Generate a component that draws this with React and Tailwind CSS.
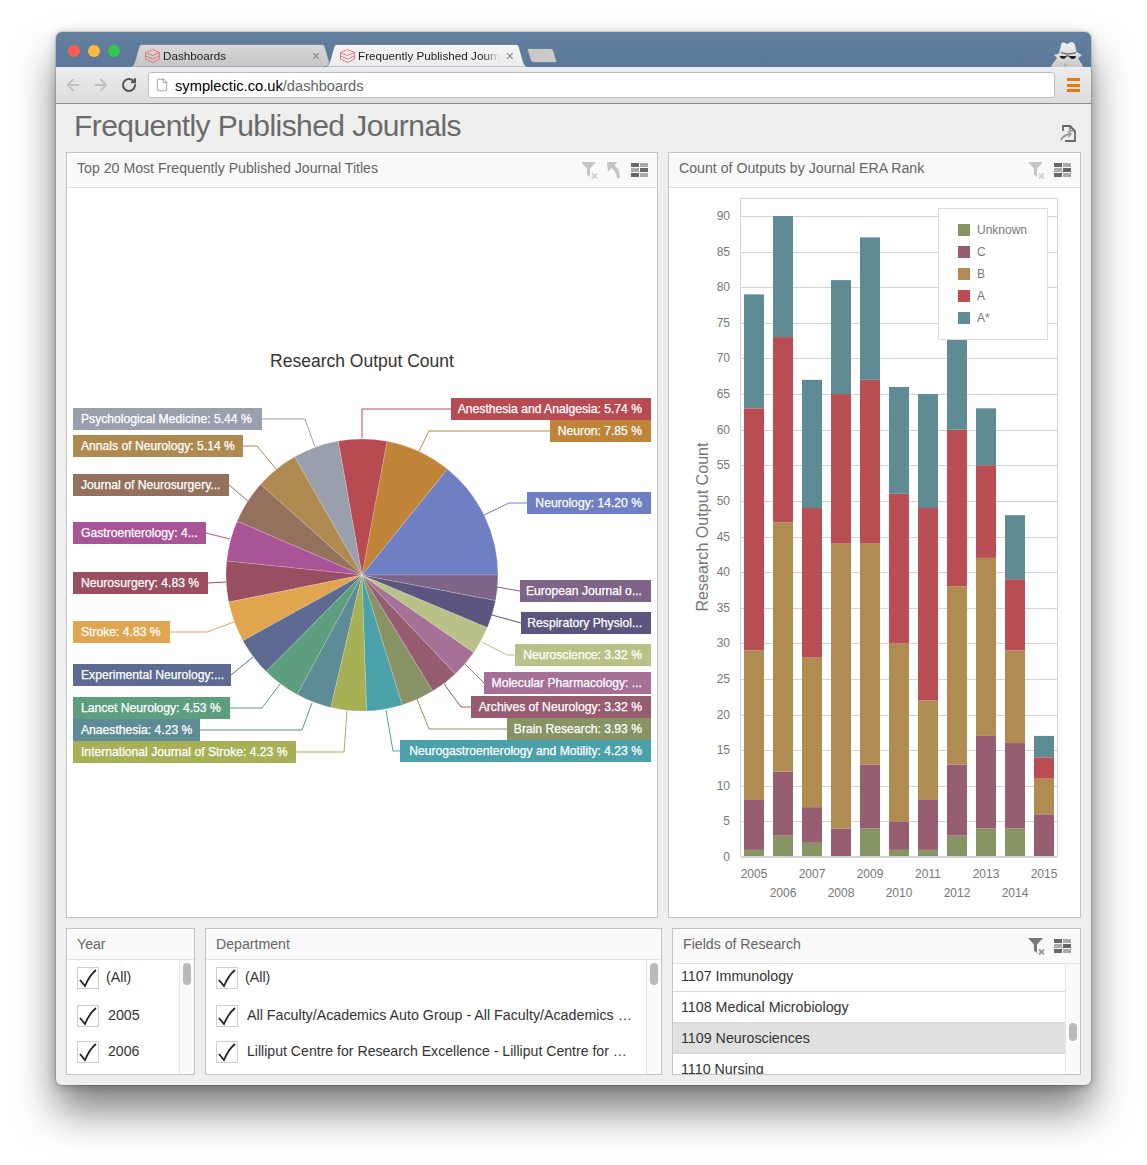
import React from "react";
import { ArrowLeft, ArrowRight, RotateCw, File } from "lucide-react";

const slices = [
  { v: 14.2, c: "#6e7fc4" }, { v: 7.85, c: "#c08439" }, { v: 5.74, c: "#b84b52" }, { v: 5.44, c: "#9a9fae" },
  { v: 5.14, c: "#af8a50" }, { v: 5.14, c: "#94715d" }, { v: 4.83, c: "#aa5498" }, { v: 4.83, c: "#9a4e61" },
  { v: 4.83, c: "#e1a550" }, { v: 4.53, c: "#5d6a92" }, { v: 4.53, c: "#5c9e7e" }, { v: 4.23, c: "#5d8b96" },
  { v: 4.23, c: "#a7b055" }, { v: 4.23, c: "#4aa1aa" }, { v: 3.93, c: "#879365" }, { v: 3.32, c: "#965c70" },
  { v: 3.32, c: "#a67196" }, { v: 3.32, c: "#b9c189" }, { v: 3.32, c: "#5b5580" }, { v: 3.0, c: "#7e6487" },
];

const labels = [
  { t: "Psychological Medicine: 5.44 %", x: 73, w: 189, y: 408, c: "#9a9fae", p: "262,419 305,419 315,447" },
  { t: "Annals of Neurology: 5.14 %", x: 73, w: 170, y: 435, c: "#af8a50", p: "243,446 257,446 276,469" },
  { t: "Journal of Neurosurgery...", x: 73, w: 156, y: 474, c: "#94715d", p: "229,485 248,501" },
  { t: "Gastroenterology: 4...", x: 73, w: 133, y: 522, c: "#aa5498", p: "206,533 230,539" },
  { t: "Neurosurgery: 4.83 %", x: 73, w: 135, y: 572, c: "#9a4e61", p: "208,583 226,582" },
  { t: "Stroke: 4.83 %", x: 73, w: 97, y: 621, c: "#e1a550", p: "170,632 207,632 234,622" },
  { t: "Experimental Neurology:...", x: 73, w: 158, y: 664, c: "#5d6a92", p: "231,675 253,657" },
  { t: "Lancet Neurology: 4.53 %", x: 73, w: 157, y: 697, c: "#5c9e7e", p: "230,708 262,708 280,684" },
  { t: "Anaesthesia: 4.23 %", x: 73, w: 127, y: 719, c: "#5d8b96", p: "200,730 302,730 312,703" },
  { t: "International Journal of Stroke: 4.23 %", x: 73, w: 223, y: 741, c: "#a7b055", p: "296,752 344,752 347,711" },
  { t: "Anesthesia and Analgesia: 5.74 %", x: 451, w: 200, y: 398, c: "#b84b52", p: "451,409 362,409 362,438" },
  { t: "Neuron: 7.85 %", x: 550, w: 101, y: 420, c: "#c08439", p: "550,431 429,431 419,451" },
  { t: "Neurology: 14.20 %", x: 527, w: 124, y: 492, c: "#6e7fc4", p: "527,503 509,503 484,515" },
  { t: "European Journal o...", x: 520, w: 131, y: 580, c: "#7e6487", p: "520,591 497,587" },
  { t: "Respiratory Physiol...", x: 521, w: 130, y: 612, c: "#5b5580", p: "521,623 492,615" },
  { t: "Neuroscience: 3.32 %", x: 515, w: 136, y: 644, c: "#b9c189", p: "515,655 507,655 482,642" },
  { t: "Molecular Pharmacology: ...", x: 484, w: 167, y: 672, c: "#a67196", p: "484,683 465,664" },
  { t: "Archives of Neurology: 3.32 %", x: 471, w: 180, y: 696, c: "#965c70", p: "471,707 461,707 444,684" },
  { t: "Brain Research: 3.93 %", x: 507, w: 144, y: 718, c: "#879365", p: "507,729 429,729 417,699" },
  { t: "Neurogastroenterology and Motility: 4.23 %", x: 400, w: 251, y: 740, c: "#4aa1aa", p: "400,751 393,751 386,710" },
];

function PieChart() {
  const cx = 362, cy = 575, r = 136;
  const total = slices.reduce((s, d) => s + d.v, 0);
  let acc = 0;
  return (
    <svg viewBox="67 188 590 729" className="block w-[590px] h-[729px]">
      <text x="362" y="367" textAnchor="middle" fontSize="17.5" fill="#333">Research Output Count</text>
      {slices.map((s, i) => {
        const a0 = (acc / total) * Math.PI * 2;
        acc += s.v;
        const a1 = (acc / total) * Math.PI * 2;
        const x0 = cx + r * Math.cos(a0), y0 = cy - r * Math.sin(a0);
        const x1 = cx + r * Math.cos(a1), y1 = cy - r * Math.sin(a1);
        const large = a1 - a0 > Math.PI ? 1 : 0;
        return <path key={i} d={`M${cx} ${cy}L${x0} ${y0}A${r} ${r} 0 ${large} 0 ${x1} ${y1}Z`} fill={s.c} stroke="#ffffff" strokeOpacity="0.35" strokeWidth="0.5" />;
      })}
      {labels.map((l, i) => (
        <g key={i}>
          <polyline points={l.p} fill="none" stroke={l.c} strokeWidth="1" />
          <rect x={l.x} y={l.y} width={l.w} height="22" fill={l.c} />
          <text x={l.x === 73 ? l.x + 8 : l.x + l.w - 9} y={l.y + 15} textAnchor={l.x === 73 ? "start" : "end"} fontSize="12.15" fill="#fff" stroke="#fff" strokeWidth="0.25">{l.t}</text>
        </g>
      ))}
    </svg>
  );
}

const barData = [
  [1, 8, 29, 63, 79], [3, 12, 47, 73, 90], [2, 7, 28, 49, 67], [0, 4, 44, 65, 81], [4, 13, 44, 67, 87], [1, 5, 30, 51, 66],
  [1, 8, 22, 49, 65], [3, 13, 38, 60, 80], [4, 17, 42, 55, 63], [4, 16, 29, 39, 48], [0, 6, 11, 14, 17],
];
const barColors = ["#879565", "#965e70", "#b08b52", "#b94e54", "#5f8b95"];
const legend = ["Unknown", "C", "B", "A", "A*"];
const Y0 = 857, U = 7.122;

function BarChart() {
  const ticks = [];
  for (let v = 0; v <= 90; v += 5) ticks.push(v);
  return (
    <svg viewBox="669 188 411 729" className="block w-[411px] h-[729px]">
      <rect x="740.5" y="198.5" width="317" height="658" fill="none" stroke="#d4d4d4" />
      {ticks.map((v) => {
        const y = Math.round(Y0 - v * U);
        return (
          <g key={v}>
            {v > 0 && <line x1="741" x2="1057" y1={y + 0.5} y2={y + 0.5} stroke="#d4d4d4" />}
            <text x="730" y={y + 4} textAnchor="end" fontSize="12" fill="#777">{v}</text>
          </g>
        );
      })}
      {barData.map((b, i) => {
        const x = 744 + i * 29;
        return (
          <g key={i}>
            {b.map((top, k) => {
              const base = k === 0 ? 0 : b[k - 1];
              if (top === base) return null;
              return <rect key={k} x={x} width="20" y={Y0 - top * U} height={(top - base) * U} fill={barColors[k]} />;
            })}
            <text x={x + 10} y={i % 2 === 0 ? 878 : 897} textAnchor="middle" fontSize="12" fill="#777">{2005 + i}</text>
          </g>
        );
      })}
      <rect x="741" y="856" width="316" height="2" fill="#d4d4d4" />
      <rect x="938.5" y="208.5" width="109" height="131" fill="#fff" stroke="#dcdcdc" />
      {legend.map((l, i) => (
        <g key={l}>
          <rect x="958" y={224 + i * 22} width="12" height="12" fill={barColors[i]} />
          <text x="977" y={234 + i * 22} fontSize="12" fill="#777">{l}</text>
        </g>
      ))}
      <text transform="translate(707.5 527) rotate(-90)" textAnchor="middle" fontSize="16.1" fill="#777">Research Output Count</text>
    </svg>
  );
}

function FilterX({ faded }) {
  return (
    <svg width="17" height="17" viewBox="0 0 17 17" className={faded ? "opacity-40" : "opacity-100"}>
      <path d="M0 0H15L9 6.5V15L6 12.5V6.5Z" fill="#777" />
      <path d="M11 11.5L16 16.5M16 11.5L11 16.5" stroke="#999" strokeWidth="1.8" />
    </svg>
  );
}

function GridIcon() {
  return (
    <svg width="17" height="14" viewBox="0 0 17 14">
      <rect x="0" y="0" width="8" height="4" fill="#666" />
      <rect x="9" y="0" width="8" height="4" fill="#aaa" />
      <rect x="0" y="5" width="8" height="4" fill="#aaa" />
      <rect x="9" y="5" width="8" height="4" fill="#666" />
      <rect x="0" y="10" width="8" height="4" fill="#666" />
      <rect x="9" y="10" width="8" height="4" fill="#aaa" />
    </svg>
  );
}

function BackIcon() {
  return (
    <svg width="14" height="16" viewBox="0 0 14 16" className="opacity-40 mr-[1px]">
      <path d="M0 0H10L7.5 3.5C11 6 13 10 13 16H10C10 12 7 8.5 4.5 6L1 10Z" fill="#777" />
    </svg>
  );
}

function Favicon() {
  return (
    <svg width="15" height="14" viewBox="0 0 15 14" fill="none" stroke="#ea7478" strokeWidth="1">
      <path d="M7.5 .5L14.5 3.5L7.5 6.5L.5 3.5Z" />
      <path d="M.5 3.5V10L7.5 13.5L14.5 10V3.5M.5 7L7.5 10L14.5 7" />
    </svg>
  );
}

function Tab({ w, active, title, className, inner }) {
  const fill = active ? "url(#tabA)" : "url(#tabI)";
  return (
    <div className={`relative h-[23px] flex items-center shrink-0 ${className}`} style={{ width: w }}>
      <svg className="absolute inset-0" width={w} height="23" viewBox={`0 0 ${w} 23`}>
        <path d={`M0 23C4 23 5 20 6 17L10 3C10.6 1 12 0.5 14 0.5H${w - 14}C${w - 12} 0.5 ${w - 10.6} 1 ${w - 10} 3L${w - 6} 17C${w - 5} 20 ${w - 4} 23 ${w} 23Z`} fill={fill} stroke={active ? "#4f6a88" : "#56708d"} strokeWidth="0.6" />
      </svg>
      <div className={`relative flex items-center min-w-0 flex-1 pt-[1px] ${inner}`}>
        <Favicon />
        <span className="ml-[3px] text-[11.7px] text-[#222] whitespace-nowrap overflow-hidden flex-1 [mask-image:linear-gradient(90deg,#000_88%,transparent)]">{title}</span>
        <span className="ml-[6px] text-[14px] leading-none text-[#888]">×</span>
      </div>
    </div>
  );
}

function Incognito() {
  return (
    <svg width="33" height="26" viewBox="0 0 33 26">
      <defs>
        <linearGradient id="spy" x1="0" y1="0" x2="0" y2="1"><stop offset="0" stopColor="#f2f2f2" /><stop offset="1" stopColor="#c8c8c8" /></linearGradient>
      </defs>
      <path d="M0 26C2 21 5 19 6 17L3 14L8 12.5L10 4C10.5 1.5 12 1 14 2L16.5 3L20 1C22 .5 23.5 2 24 4L25.5 11L31 14L27 17C28 20 31 22 32 26Z" fill="url(#spy)" />
      <path d="M10 10.5C14 12.5 21 12.5 25 10.5L25 12C21 14 14 14 10 12Z" fill="#777" />
      <path d="M8.5 15H15C15.5 18.5 10 19 8.5 15ZM18 15H25C25 19 18.5 19 18 15Z" fill="#222" />
      <path d="M15 15H18" stroke="#222" strokeWidth="1" />
      <path d="M14 22L17 25H13Z" fill="#aaa" />
    </svg>
  );
}

function Check() {
  return (
    <span className="block w-[22px] h-[22px] bg-white border border-[#cfcfcf] shrink-0">
      <svg width="20" height="20" viewBox="0 0 20 20" fill="none" stroke="#222" strokeWidth="1.8">
        <path d="M2 12L7 18C9.5 12 13 6 18 2" />
      </svg>
    </span>
  );
}

function Panel({ title, icons, w, h, headH, children }) {
  return (
    <section className="bg-white border border-[#c4c4c4] flex flex-col overflow-hidden shrink-0" style={{ width: w, height: h }}>
      <header className="bg-[#f9f9f9] border-b border-[#e2e2e2] flex items-center justify-between pl-[10px] pr-[9px] shrink-0" style={{ height: headH }}>
        <span className={`text-[14.15px] text-[#666] ${headH === 35 ? "mb-[3px]" : "mt-[1px]"}`}>{title}</span>
        {icons && <div className="flex items-center gap-[9px]">{icons}</div>}
      </header>
      {children}
    </section>
  );
}

function CheckList({ rows, thumbH = 22 }) {
  return (
    <div className="flex flex-1 min-h-0">
      <div className="flex-1 min-w-0 pl-[10px] pt-[4px] flex flex-col">
        {rows.map((r, i) => (
          <div key={i} className={`flex items-center h-[27px] ${i === 0 ? "mb-[11px]" : i === 1 ? "mb-[9px]" : ""}`}>
            <Check />
            <span className={`${i === 0 ? "ml-[7px]" : "ml-[9px]"} ${i === 2 ? "text-[14.1px]" : "text-[14.25px]"} text-[#333] whitespace-nowrap`}>{r}</span>
          </div>
        ))}
      </div>
      <div className="w-[15px] border-l border-[#e8e8e8] bg-[#fafafa] pt-[3px] pl-[3px] shrink-0">
        <div className="w-[8px] rounded-[4px] bg-[#b9b9b9]" style={{ height: thumbH }} />
      </div>
    </div>
  );
}

const fields = [
  { t: "1107 Immunology", h: 28, first: true },
  { t: "1108 Medical Microbiology", h: 31 },
  { t: "1109 Neurosciences", h: 31, sel: true },
  { t: "1110 Nursing", h: 31 },
];

export default function App() {
  return (
    <div className="w-[1147px] h-[1165px] bg-white pt-[32px] pl-[56px] overflow-hidden font-['Liberation_Sans',Arial,sans-serif]">
      <svg width="0" height="0" className="absolute">
        <defs>
          <linearGradient id="tabA" x1="0" y1="0" x2="0" y2="1"><stop offset="0" stopColor="#f4f4f4" /><stop offset="1" stopColor="#ececec" /></linearGradient>
          <linearGradient id="tabI" x1="0" y1="0" x2="0" y2="1"><stop offset="0" stopColor="#d9d9d9" /><stop offset="1" stopColor="#c4c4c4" /></linearGradient>
        </defs>
      </svg>
      <div className="w-[1035px] h-[1053px] bg-[#eeeeee] rounded-[6px] shadow-[0_26px_42px_0_rgba(0,0,0,0.5),0_0_0_1px_rgba(0,0,0,0.1),0_2px_10px_0_rgba(0,0,0,0.25)] flex flex-col overflow-visible">
        <div className="relative h-[35px] rounded-t-[6px] bg-[linear-gradient(#647f9e,#5b7898)] flex items-end shrink-0">
          <div className="flex gap-[8px] self-start mt-[13px] ml-[12px] mr-[11px]">
            <span className="w-[12px] h-[12px] rounded-full bg-[#fc5b57]" />
            <span className="w-[12px] h-[12px] rounded-full bg-[#fdbc40]" />
            <span className="w-[12px] h-[12px] rounded-full bg-[#34c84a]" />
          </div>
          <div className="flex items-end ml-[-2px]">
            <Tab w={206} title="Dashboards" inner="ml-[16px] pr-[15px]" />
            <Tab w={205} active title="Frequently Published Journ" className="ml-[-11px]" inner="ml-[16px] pr-[15px]" />
            <svg width="33" height="15" viewBox="0 0 33 15" className="ml-[-3px] mb-[4px]">
              <path d="M1 0.5H24C26 0.5 27 1.5 27.5 3L31 14.5H8C6 14.5 5 13.5 4.5 12L1 0.5Z" fill="#c9c9c9" stroke="#56708d" strokeWidth="0.6" />
            </svg>
          </div>
          <div className="absolute right-[7px] bottom-0 leading-[0]"><Incognito /></div>
        </div>
        <div className="h-[37px] bg-[linear-gradient(#ececec,#dcdcdc)] border-b border-[#8a8a8a] flex items-center shrink-0 pl-[8px] pr-[11px]">
          <ArrowLeft size={18} strokeWidth={2.6} className="text-[#c0c0c0]" />
          <ArrowRight size={18} strokeWidth={2.6} className="text-[#c0c0c0] ml-[10px]" />
          <RotateCw size={16} strokeWidth={3} className="text-[#555] ml-[11px]" />
          <div className="ml-[11px] flex-1 h-[26px] mt-[-1px] bg-white rounded-[3px] border border-[#bdbdbd] flex items-center pl-[6px]">
            <File size={14} strokeWidth={1} className="text-[#666]" />
            <span className="ml-[6px] mt-[3px] text-[14.7px] text-black">symplectic.co.uk<span className="text-[#666]">/dashboards</span></span>
          </div>
          <div className="ml-[12px] w-[13px] flex flex-col gap-[2.5px] shrink-0">
            <span className="h-[3px] bg-[#e57910]" />
            <span className="h-[3px] bg-[#e57910]" />
            <span className="h-[3px] bg-[#e57910]" />
          </div>
        </div>
        <main className="px-[10px] flex flex-col flex-1 min-h-0">
          <div className="h-[48px] flex items-center justify-between pl-[8px] pr-[5px] shrink-0">
            <h1 className="text-[30px] tracking-[-0.57px] text-[#6a6a6a] font-normal leading-none mt-[-4px]">Frequently Published Journals</h1>
            <svg width="16" height="17" viewBox="0 0 16 17" fill="none" stroke="#666" strokeWidth="1.8" className="mt-[10px]">
              <path d="M3 6V1H10L15 6V16H5" />
              <path d="M10 1V6H15" strokeWidth="1.2" />
              <path d="M1 15C3 11 6 9.5 10.5 9" stroke="#999" strokeWidth="2" />
              <path d="M7.5 6.5L11 9L8.5 12" stroke="#999" strokeWidth="1.5" />
            </svg>
          </div>
          <div className="flex gap-[10px] shrink-0">
            <Panel w={592} h={766} headH={35} title="Top 20 Most Frequently Published Journal Titles" icons={<><FilterX faded /><BackIcon /><GridIcon /></>}>
              <PieChart />
            </Panel>
            <Panel w={413} h={766} headH={35} title="Count of Outputs by Journal ERA Rank" icons={<><FilterX faded /><GridIcon /></>}>
              <BarChart />
            </Panel>
          </div>
          <div className="flex gap-[10px] mt-[10px] shrink-0">
            <Panel w={129} h={147} headH={31} title="Year">
              <CheckList rows={["(All)", "2005", "2006"]} />
            </Panel>
            <Panel w={457} h={147} headH={31} title="Department">
              <CheckList rows={["(All)", "All Faculty/Academics Auto Group - All Faculty/Academics …", "Lilliput Centre for Research Excellence - Lilliput Centre for …"]} />
            </Panel>
            <Panel w={409} h={147} headH={35} title="Fields of Research" icons={<><FilterX /><GridIcon /></>}>
              <div className="flex flex-1 min-h-0">
                <div className="flex-1 min-w-0 overflow-hidden">
                  {fields.map((f) => (
                    <div key={f.t} className={`flex items-center pl-[8px] border-b border-[#d8d8d8] text-[14.25px] text-[#333] ${f.first ? "pb-[2px]" : "pt-[1px]"} ${f.sel ? "bg-[#e0e0e0] text-[#222]" : "bg-white"}`} style={{ height: f.h }}>
                      {f.t}
                    </div>
                  ))}
                </div>
                <div className="w-[15px] border-l border-[#e8e8e8] bg-[#fafafa] pl-[3px] pt-[59px] shrink-0">
                  <div className="w-[8px] h-[18px] rounded-[4px] bg-[#b9b9b9]" />
                </div>
              </div>
            </Panel>
          </div>
        </main>
      </div>
    </div>
  );
}
